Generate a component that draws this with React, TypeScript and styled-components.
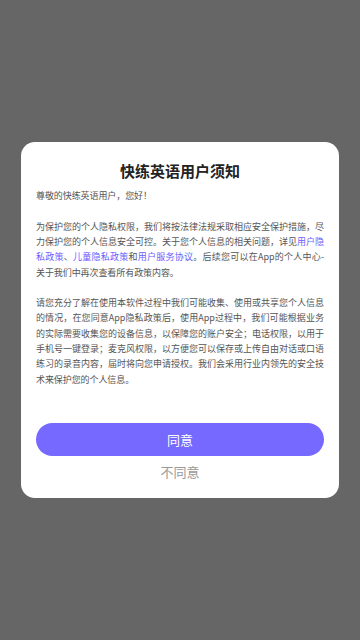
import React from 'react'
import styled, { createGlobalStyle } from 'styled-components'

const GlobalStyle = createGlobalStyle`
  html, body {
    margin: 0;
    padding: 0;
    height: 100%;
  }
  body {
    font-family: "Noto Sans CJK SC", "Noto Sans", sans-serif;
    background: #666666;
  }
  #root {
    height: 100%;
  }
`

const Overlay = styled.div`
  display: flex;
  align-items: center;
  justify-content: center;
  min-height: 640px;
  height: 100%;
  background: #666666;
`

const Dialog = styled.div`
  width: 318px;
  box-sizing: border-box;
  background: #ffffff;
  border-radius: 14px;
  padding: 18px 15px 16px;
  display: flex;
  flex-direction: column;
`

const Title = styled.h2`
  margin: 0;
  font-size: 15px;
  line-height: 22px;
  font-weight: 700;
  color: #222222;
  text-align: center;
`

const Body = styled.div`
  margin-top: 6px;
  font-size: 9px;
  line-height: 15.3px;
  letter-spacing: -0.08px;
  color: #555555;
  text-align: justify;
`

const Para = styled.p<{ $gap?: boolean }>`
  margin: 0;
  margin-top: ${({ $gap }) => ($gap ? '15.3px' : '0')};
`

const Link = styled.a`
  color: #6a5cff;
  text-decoration: none;
`

const Keep = styled.span`
  white-space: nowrap;
`

const AgreeButton = styled.button`
  margin-top: 36px;
  height: 33px;
  width: 100%;
  border: none;
  border-radius: 17px;
  background: #7669ff;
  color: #ffffff;
  font-family: inherit;
  font-size: 13px;
  cursor: pointer;
`

const RejectButton = styled.button`
  margin-top: 6px;
  height: 20px;
  border: none;
  background: transparent;
  color: #999999;
  font-family: inherit;
  font-size: 13px;
  line-height: 20px;
  padding: 0;
  cursor: pointer;
`

const App: React.FC = () => {
  return (
    <>
      <GlobalStyle />
      <Overlay>
        <Dialog>
          <Title>快练英语用户须知</Title>
          <Body>
            <Para>尊敬的快练英语用户，您好！</Para>
            <Para $gap>
              为保护您的个人隐私权限，我们将按法律法规采取相应安全保护措施，尽力保护您的个人信息安全可控。关于您个人信息的相关问题，详见
              <Link href="#">用户隐私政策</Link>、<Link href="#">儿童隐私政策</Link>和
              <Link href="#">用户服务协议</Link>
              。后续您可以在App的个人中心-<Keep>关于我们</Keep>中再次查看所有政策内容。
            </Para>
            <Para $gap>
              请您充分了解在使用本软件过程中我们可能收集、使用或共享您个人信息的情况，在您同意App隐私政策后，使用App过程中，我们可能根据业务的实际需要收集您的设备信息，以保障您的账户安全；电话权限，以用于手机号一键登录；麦克风权限，以方便您可以保存或上传自由对话或口语练习的录音内容，届时将向您申请授权。我们会采用行业内领先的安全技术来保护您的个人信息。
            </Para>
          </Body>
          <AgreeButton>同意</AgreeButton>
          <RejectButton>不同意</RejectButton>
        </Dialog>
      </Overlay>
    </>
  )
}

export default App
